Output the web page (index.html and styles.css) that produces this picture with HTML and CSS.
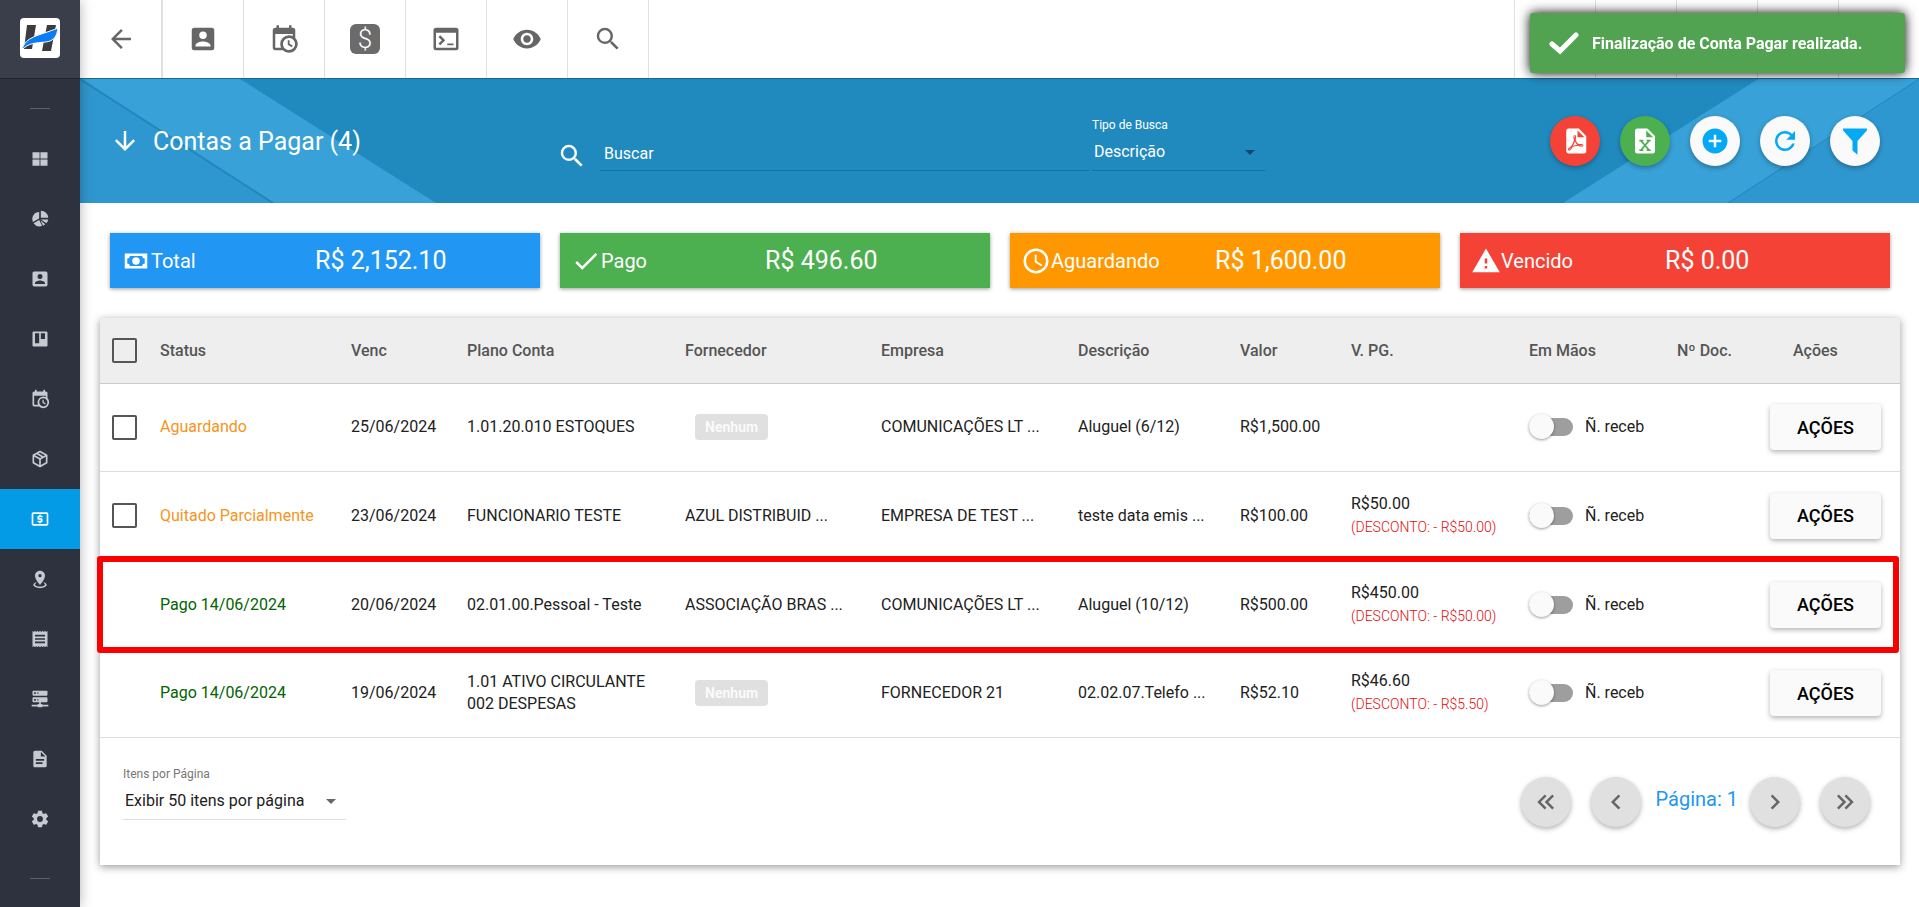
FILE: index.html
```
<!DOCTYPE html>
<html lang="pt-BR">
<head>
    <meta charset="UTF-8">
    <meta name="viewport" content="width=device-width, initial-scale=1.0">
    <title>Contas a Pagar</title>
    <link rel="stylesheet" href="styles.css">
</head>
<body>

<!-- Sidebar -->
<aside class="sidebar">
    <a href="#" class="logo" aria-label="Início">
        <svg viewBox="0 0 40 40">
            <rect width="40" height="40" rx="4" fill="#fff"/>
            <path d="M7 7h9l-4 24H4zM27 7h9l-5 26h-9z" fill="#3c3c40"/>
            <path d="M2 32C5 18 19 18 38 10c-1 8-4 13-12 14C15 25 8 25 2 32z" fill="#0a7cf5" stroke="#fff"/>
        </svg>
    </a>
    <nav class="menu">
        <hr>
        <a href="#" aria-label="Painel"><svg viewBox="0 0 24 24"><path d="M3 4h8.500v7.500H3zM12.500 4H21v7.500h-8.500zM3 12.500h8.500V20H3zM12.500 12.500H21V20h-8.500z"/></svg></a>
        <a href="#" aria-label="Gráficos"><svg viewBox="0 0 24 24"><path d="M13 2a9 9 0 0 1 9 8.500h-9zM11 3.500v8L3.500 15.500A8.500 8.500 0 0 1 11 3.500zM4.200 17L11 13.300l3.500 6.900A9 9 0 0 1 4.200 17zM13 12.500h8.800a9 9 0 0 1-2 4.500zM12.500 13.500l5.700 4.800a8 8 0 0 1-2.500 1.700z"/></svg></a>
        <a href="#" aria-label="Cadastros"><svg viewBox="0 0 24 24"><path d="M6,17C6,15 10,13.900 12,13.900C14,13.900 18,15 18,17V18H6M15,9A3,3 0 0,1 12,12A3,3 0 0,1 9,9A3,3 0 0,1 12,6A3,3 0 0,1 15,9M3,5V19A2,2 0 0,0 5,21H19A2,2 0 0,0 21,19V5A2,2 0 0,0 19,3H5C3.890,3 3,3.900 3,5Z"/></svg></a>
        <a href="#" aria-label="Quadros"><svg viewBox="0 0 24 24"><path fill-rule="evenodd" d="M4 3h16l1 1v16l-1 1H4l-1-1V4zM6 5v12h5V5zM13 5v7h5V5z"/></svg></a>
        <a href="#" aria-label="Agenda"><svg viewBox="0 0 24 24"><path d="M15,13H16.500V15.820L18.940,17.230L18.190,18.530L15,16.690V13M19,8H5V19H9.670C9.240,18.090 9,17.070 9,16A7,7 0 0,1 16,9C17.070,9 18.090,9.240 19,9.670V8M5,21C3.890,21 3,20.100 3,19V5C3,3.890 3.890,3 5,3H6V1H8V3H16V1H18V3H19A2,2 0 0,1 21,5V11.100C22.240,12.360 23,14.090 23,16A7,7 0 0,1 16,23C14.090,23 12.360,22.240 11.100,21H5M16,11.150A4.850,4.850 0 0,0 11.150,16C11.150,18.680 13.320,20.850 16,20.850A4.850,4.850 0 0,0 20.850,16C20.850,13.320 18.680,11.150 16,11.150Z"/></svg></a>
        <a href="#" aria-label="Produtos"><svg viewBox="0 0 24 24"><path d="M21,16.500C21,16.880 20.790,17.210 20.470,17.380L12.570,21.820C12.410,21.940 12.210,22 12,22C11.790,22 11.590,21.940 11.430,21.820L3.530,17.380C3.210,17.210 3,16.880 3,16.500V7.500C3,7.120 3.210,6.790 3.530,6.620L11.430,2.180C11.590,2.060 11.790,2 12,2C12.210,2 12.410,2.060 12.570,2.180L20.470,6.620C20.790,6.790 21,7.120 21,7.500V16.500M12,4.150L10.110,5.220L16,8.610L17.960,7.500L12,4.150M6.040,7.500L12,10.850L13.960,9.750L8.080,6.350L6.040,7.500M5,15.910L11,19.290V12.580L5,9.210V15.910M19,15.910V9.210L13,12.580V19.290L19,15.910Z"/></svg></a>
        <a href="#" class="active" aria-label="Financeiro"><svg viewBox="0 0 24 24"><path d="M11 17h2v-1h1c.55 0 1-.45 1-1v-3c0-.55-.45-1-1-1h-3v-1h4V8h-2V7h-2v1h-1c-.55 0-1 .45-1 1v3c0 .55.45 1 1 1h3v1H9v2h2v1zm9-13H4c-1.110 0-1.990.89-1.990 2L2 18c0 1.110.89 2 2 2h16c1.110 0 2-.89 2-2V6c0-1.110-.89-2-2-2zm0 14H4V6h16v12z"/></svg></a>
        <a href="#" aria-label="Localização"><svg viewBox="0 0 24 24"><path d="M12,2C15.310,2 18,4.660 18,7.950C18,12.410 12,19 12,19C12,19 6,12.410 6,7.950C6,4.660 8.690,2 12,2M12,6A2,2 0 0,0 10,8A2,2 0 0,0 12,10A2,2 0 0,0 14,8A2,2 0 0,0 12,6M20,19C20,21.210 16.420,23 12,23C7.580,23 4,21.210 4,19C4,17.710 5.220,16.560 7.110,15.830L7.750,16.740C6.670,17.190 6,17.810 6,18.500C6,19.880 8.690,21 12,21C15.310,21 18,19.880 18,18.500C18,17.810 17.330,17.190 16.250,16.740L16.890,15.830C18.780,16.560 20,17.710 20,19Z"/></svg></a>
        <a href="#" aria-label="Notas"><svg viewBox="0 0 24 24"><path d="M18 17H6v-2h12v2zm0-4H6v-2h12v2zm0-4H6V7h12v2zM3 22l1.500-1.500L6 22l1.500-1.500L9 22l1.500-1.500L12 22l1.500-1.500L15 22l1.500-1.500L18 22l1.500-1.500L21 22V2l-1.500 1.500L18 2l-1.500 1.500L15 2l-1.500 1.500L12 2l-1.500 1.500L9 2 7.500 3.500 6 2 4.500 3.500 3 2v20z"/></svg></a>
        <a href="#" aria-label="Servidores"><svg viewBox="0 0 24 24"><path d="M13,18H14A1,1 0 0,1 15,19H22V21H15A1,1 0 0,1 14,22H10A1,1 0 0,1 9,21H2V19H9A1,1 0 0,1 10,18H11V16H4A1,1 0 0,1 3,15V11A1,1 0 0,1 4,10H20A1,1 0 0,1 21,11V15A1,1 0 0,1 20,16H13V18M4,2H20A1,1 0 0,1 21,3V7A1,1 0 0,1 20,8H4A1,1 0 0,1 3,7V3A1,1 0 0,1 4,2M9,6H10V4H9V6M9,14H10V12H9V14M5,4V6H7V4H5M5,12V14H7V12H5Z"/></svg></a>
        <a href="#" aria-label="Relatórios"><svg viewBox="0 0 24 24"><path d="M14 2H6c-1.100 0-1.990.9-1.990 2L4 20c0 1.100.89 2 1.990 2H18c1.100 0 2-.9 2-2V8l-6-6zm1 16H7v-2h8v2zm2-4H7v-2h10v2zm-4-5V3.500L18.500 9H13z"/></svg></a>
        <a href="#" aria-label="Configurações"><svg viewBox="0 0 24 24"><path d="M12,15.500A3.500,3.500 0 0,1 8.500,12A3.500,3.500 0 0,1 12,8.500A3.500,3.500 0 0,1 15.500,12A3.500,3.500 0 0,1 12,15.500M19.430,12.970C19.470,12.650 19.500,12.330 19.500,12C19.500,11.670 19.470,11.340 19.430,11L21.540,9.370C21.730,9.220 21.780,8.950 21.660,8.730L19.660,5.270C19.540,5.050 19.270,4.960 19.050,5.050L16.560,6.050C16.040,5.660 15.500,5.320 14.870,5.070L14.500,2.420C14.460,2.180 14.250,2 14,2H10C9.750,2 9.540,2.180 9.500,2.420L9.130,5.070C8.500,5.320 7.960,5.660 7.440,6.050L4.950,5.050C4.730,4.960 4.460,5.050 4.340,5.270L2.340,8.730C2.210,8.950 2.270,9.220 2.460,9.370L4.570,11C4.530,11.340 4.500,11.670 4.500,12C4.500,12.330 4.530,12.650 4.570,12.970L2.460,14.630C2.270,14.780 2.210,15.050 2.340,15.270L4.340,18.730C4.460,18.950 4.730,19.030 4.950,18.950L7.440,17.940C7.960,18.340 8.500,18.680 9.130,18.930L9.500,21.580C9.540,21.820 9.750,22 10,22H14C14.250,22 14.460,21.820 14.500,21.580L14.870,18.930C15.500,18.670 16.040,18.340 16.560,17.940L19.050,18.950C19.270,19.030 19.540,18.950 19.660,18.730L21.660,15.270C21.780,15.050 21.730,14.780 21.540,14.630L19.430,12.970Z"/></svg></a>
        <hr>
    </nav>
</aside>

<main class="page">

    <!-- Top toolbar -->
    <header class="topbar">
        <div class="tools">
            <button type="button" aria-label="Voltar"><svg viewBox="0 0 24 24"><path d="M20 11H7.800l5.600-5.600L12 4l-8 8 8 8 1.400-1.400L7.800 13H20z"/></svg></button>
            <button type="button" aria-label="Clientes"><svg viewBox="0 0 24 24"><path d="M6,17C6,15 10,13.900 12,13.900C14,13.900 18,15 18,17V18H6M15,9A3,3 0 0,1 12,12A3,3 0 0,1 9,9A3,3 0 0,1 12,6A3,3 0 0,1 15,9M3,5V19A2,2 0 0,0 5,21H19A2,2 0 0,0 21,19V5A2,2 0 0,0 19,3H5C3.890,3 3,3.900 3,5Z"/></svg></button>
            <button type="button" aria-label="Agenda"><svg viewBox="0 0 24 24"><path d="M15,13H16.500V15.820L18.940,17.230L18.190,18.530L15,16.690V13M19,8H5V19H9.670C9.240,18.090 9,17.070 9,16A7,7 0 0,1 16,9C17.070,9 18.090,9.240 19,9.670V8M5,21C3.890,21 3,20.100 3,19V5C3,3.890 3.890,3 5,3H6V1H8V3H16V1H18V3H19A2,2 0 0,1 21,5V11.100C22.240,12.360 23,14.090 23,16A7,7 0 0,1 16,23C14.090,23 12.360,22.240 11.100,21H5M16,11.150A4.850,4.850 0 0,0 11.150,16C11.150,18.680 13.320,20.850 16,20.850A4.850,4.850 0 0,0 20.850,16C20.850,13.320 18.680,11.150 16,11.150Z"/></svg></button>
            <button type="button" aria-label="Caixa"><span class="money">$</span></button>
            <button type="button" aria-label="Terminal"><svg viewBox="0 0 24 24"><path fill-rule="evenodd" d="M4 3h16a2 2 0 0 1 2 2v14a2 2 0 0 1-2 2H4a2 2 0 0 1-2-2V5a2 2 0 0 1 2-2zM4 7v12h16V7zM7.400 9L6 10.400 8.600 13 6 15.600 7.400 17l4-4zM13 15.500h5V17h-5z"/></svg></button>
            <button type="button" aria-label="Visualizar"><svg viewBox="0 0 24 24"><path d="M12 4.500C7 4.500 2.730 7.610 1 12c1.730 4.390 6 7.500 11 7.500s9.270-3.110 11-7.500c-1.730-4.390-6-7.500-11-7.500zM12 17c-2.760 0-5-2.240-5-5s2.240-5 5-5 5 2.240 5 5-2.240 5-5 5zm0-8c-1.660 0-3 1.340-3 3s1.340 3 3 3 3-1.340 3-3-1.340-3-3-3z"/></svg></button>
            <button type="button" aria-label="Pesquisar"><svg viewBox="0 0 24 24"><path d="M15.500 14h-.79l-.28-.27A6.471 6.471 0 0 0 16 9.500 6.500 6.500 0 1 0 9.500 16c1.610 0 3.090-.59 4.230-1.570l.27.280v.79l5 4.990L20.490 19l-4.990-5zm-6 0C7.010 14 5 11.990 5 9.500S7.010 5 9.500 5 14 7.010 14 9.500 11.990 14 9.500 14z"/></svg></button>
        </div>
        <div class="slots"><span></span><span></span><span></span><span></span><span></span></div>
    </header>

    <!-- Page banner -->
    <section class="banner">
        <svg class="stripes stripes-left" viewBox="0 0 356 124">
            <path d="M0 0L193 124H0z" fill="#2f97cf"/>
            <path d="M0 0H160L356 124H193z" fill="#38a1d7"/>
            <path d="M0 0L193 124" stroke="#2586bb" stroke-width="2"/>
        </svg>
        <svg class="stripes stripes-right" viewBox="0 0 356 124">
            <path d="M356 0L165 124H356z" fill="#2f97cf"/>
            <path d="M195 0H356L165 124H0z" fill="#38a1d7"/>
            <path d="M356 0L165 124" stroke="#2586bb"/>
        </svg>

        <div class="title">
            <svg class="icon" viewBox="0 0 24 24"><path d="M11 4v12.200L5.400 10.600 4 12l8 8 8-8-1.400-1.400-5.600 5.600V4z"/></svg>
            <h1>Contas a Pagar (4)</h1>
        </div>

        <form class="search">
            <svg class="icon" viewBox="0 0 24 24"><path d="M15.500 14h-.79l-.28-.27A6.471 6.471 0 0 0 16 9.500 6.500 6.500 0 1 0 9.500 16c1.610 0 3.090-.59 4.230-1.570l.27.280v.79l5 4.990L20.490 19l-4.990-5zm-6 0C7.010 14 5 11.990 5 9.500S7.010 5 9.500 5 14 7.010 14 9.500 11.990 14 9.500 14z"/></svg>
            <input type="text" id="busca" placeholder="Buscar" aria-label="Buscar">
            <div class="field field-type">
                <label for="tipoBusca">Tipo de Busca</label>
                <select id="tipoBusca">
                    <option>Descrição</option>
                </select>
            </div>
        </form>

        <div class="actions">
            <button type="button" class="round red" aria-label="PDF"><svg class="icon" viewBox="0 0 24 24"><path d="M14,9H19.500L14,3.500V9M7,2H15L21,8V20A2,2 0 0,1 19,22H7C5.890,22 5,21.100 5,20V4A2,2 0 0,1 7,2M11.930,12.440C12.340,13.340 12.860,14.080 13.460,14.590L13.870,14.910C13,15.070 11.800,15.350 10.530,15.840V15.840L10.420,15.880L10.920,14.840C11.370,13.970 11.700,13.180 11.930,12.440M18.410,16.250C18.590,16.070 18.680,15.840 18.690,15.590C18.720,15.390 18.670,15.200 18.570,15.040C18.280,14.570 17.530,14.350 16.290,14.350L15,14.420L14.130,13.840C13.500,13.320 12.930,12.410 12.530,11.280L12.570,11.140C12.900,9.810 13.210,8.200 12.550,7.540C12.390,7.380 12.170,7.300 11.940,7.300H11.700C11.330,7.300 11,7.690 10.910,8.070C10.540,9.400 10.760,10.130 11.130,11.340V11.350C10.880,12.230 10.560,13.250 10.050,14.280L9.090,16.080L8.200,16.570C7,17.320 6.430,18.160 6.320,18.690C6.280,18.880 6.300,19.050 6.370,19.230L6.400,19.280L6.880,19.590L7.320,19.700C8.130,19.700 9.050,18.750 10.290,16.630L10.470,16.560C11.500,16.230 12.780,16 14.500,15.810C15.530,16.320 16.740,16.550 17.500,16.550C17.940,16.550 18.240,16.440 18.410,16.250M18,15.540L18.090,15.650C18.080,15.750 18.050,15.760 18,15.780H17.960L17.770,15.800C17.310,15.800 16.600,15.610 15.870,15.290C15.960,15.190 16,15.190 16.100,15.190C17.500,15.190 17.900,15.440 18,15.540M8.830,17C8.180,18.190 7.590,18.850 7.140,19C7.190,18.620 7.640,17.960 8.350,17.310L8.830,17M11.850,10.090C11.620,9.190 11.610,8.460 11.780,8.040L11.850,7.920L12,7.970C12.170,8.210 12.190,8.530 12.090,9.070L12.060,9.230L11.900,10.050L11.850,10.090Z"/></svg></button>
            <button type="button" class="round green" aria-label="Excel"><svg class="icon" viewBox="0 0 24 24"><path d="M14 2H6a2 2 0 0 0-2 2v16a2 2 0 0 0 2 2h12a2 2 0 0 0 2-2V8zM13 3.500L18.500 9H13z"/><path d="M9 12l6 7M15 12l-6 7" stroke="#4caf50" stroke-width="1.500"/><path d="M7.500 11.700h3.200M13.300 11.700h3.200M7.500 19.300h3.200M13.300 19.300h3.200" stroke="#4caf50" stroke-width="1.300"/></svg></button>
            <button type="button" class="round" aria-label="Adicionar"><svg class="icon" viewBox="0 0 24 24"><path d="M12 2C6.480 2 2 6.480 2 12s4.480 10 10 10 10-4.480 10-10S17.520 2 12 2zm5 11h-4v4h-2v-4H7v-2h4V7h2v4h4v2z"/></svg></button>
            <button type="button" class="round" aria-label="Atualizar"><svg class="icon" viewBox="0 0 24 24"><path d="M17.650 6.350C16.200 4.900 14.210 4 12 4c-4.420 0-7.990 3.580-7.990 8s3.570 8 7.990 8c3.730 0 6.840-2.550 7.730-6h-2.080c-.82 2.330-3.040 4-5.650 4-3.310 0-6-2.690-6-6s2.690-6 6-6c1.660 0 3.140.69 4.220 1.780L13 11h7V4l-2.350 2.350z"/></svg></button>
            <button type="button" class="round" aria-label="Filtrar"><svg class="icon" viewBox="0 0 24 24"><path d="M2.500 2h19v1.500L14 12v11l-4-3.500V12L2.500 3.500z"/></svg></button>
        </div>
    </section>

    <!-- Totals -->
    <section class="totals">
        <div class="total blue">
            <svg class="icon" viewBox="0 0 24 24"><path d="M3,6H21V18H3V6M12,9A3,3 0 0,1 15,12A3,3 0 0,1 12,15A3,3 0 0,1 9,12A3,3 0 0,1 12,9M7,8A2,2 0 0,1 5,10V14A2,2 0 0,1 7,16H17A2,2 0 0,1 19,14V10A2,2 0 0,1 17,8H7Z"/></svg>
            <span class="name">Total</span>
            <span class="amount">R$ 2,152.10</span>
        </div>
        <div class="total green">
            <svg class="icon" viewBox="0 0 24 24"><path d="M21,7L9,19L3.500,13.500L4.910,12.090L9,16.170L19.590,5.590L21,7Z"/></svg>
            <span class="name">Pago</span>
            <span class="amount">R$ 496.60</span>
        </div>
        <div class="total orange">
            <svg class="icon" viewBox="0 0 24 24"><path d="M12 2a10 10 0 1 0 0 20 10 10 0 0 0 0-20zm0 18a8 8 0 1 1 0-16 8 8 0 0 1 0 16zm.5-13H11v6l5.200 3.200.8-1.300-4.500-2.700z"/></svg>
            <span class="name">Aguardando</span>
            <span class="amount">R$ 1,600.00</span>
        </div>
        <div class="total red">
            <svg class="icon" viewBox="0 0 24 24"><path d="M1 21h22L12 2 1 21zm12-3h-2v-2h2v2zm0-4h-2v-4h2v4z"/></svg>
            <span class="name">Vencido</span>
            <span class="amount">R$ 0.00</span>
        </div>
    </section>

    <!-- Bills table -->
    <section class="panel">
        <table class="bills">
            <colgroup>
                <col class="c-check"><col class="c-status"><col class="c-due"><col class="c-plan">
                <col class="c-supplier"><col class="c-company"><col class="c-desc"><col class="c-value">
                <col class="c-paid"><col class="c-hand"><col class="c-doc"><col class="c-actions">
            </colgroup>
            <thead>
                <tr>
                    <th><input type="checkbox" class="check" aria-label="Selecionar todos"></th>
                    <th>Status</th>
                    <th>Venc</th>
                    <th>Plano Conta</th>
                    <th>Fornecedor</th>
                    <th>Empresa</th>
                    <th>Descrição</th>
                    <th>Valor</th>
                    <th>V. PG.</th>
                    <th>Em Mãos</th>
                    <th>Nº Doc.</th>
                    <th>Ações</th>
                </tr>
            </thead>
            <tbody>
                <tr>
                    <td><input type="checkbox" class="check" aria-label="Selecionar conta 1"></td>
                    <td class="pending">Aguardando</td>
                    <td>25/06/2024</td>
                    <td>1.01.20.010 ESTOQUES</td>
                    <td><span class="badge">Nenhum</span></td>
                    <td>COMUNICAÇÕES LT ...</td>
                    <td>Aluguel (6/12)</td>
                    <td>R$1,500.00</td>
                    <td></td>
                    <td><label class="switch"><input type="checkbox">Ñ. receb</label></td>
                    <td></td>
                    <td><button type="button" class="btn">AÇÕES</button></td>
                </tr>
                <tr>
                    <td><input type="checkbox" class="check" aria-label="Selecionar conta 2"></td>
                    <td class="pending">Quitado Parcialmente</td>
                    <td>23/06/2024</td>
                    <td>FUNCIONARIO TESTE</td>
                    <td>AZUL DISTRIBUID ...</td>
                    <td>EMPRESA DE TEST ...</td>
                    <td>teste data emis ...</td>
                    <td>R$100.00</td>
                    <td>R$50.00<small>(DESCONTO: - R$50.00)</small></td>
                    <td><label class="switch"><input type="checkbox">Ñ. receb</label></td>
                    <td></td>
                    <td><button type="button" class="btn">AÇÕES</button></td>
                </tr>
                <tr class="highlight">
                    <td></td>
                    <td class="paid">Pago 14/06/2024</td>
                    <td>20/06/2024</td>
                    <td>02.01.00.Pessoal - Teste</td>
                    <td>ASSOCIAÇÃO BRAS ...</td>
                    <td>COMUNICAÇÕES LT ...</td>
                    <td>Aluguel (10/12)</td>
                    <td>R$500.00</td>
                    <td>R$450.00<small>(DESCONTO: - R$50.00)</small></td>
                    <td><label class="switch"><input type="checkbox">Ñ. receb</label></td>
                    <td></td>
                    <td><button type="button" class="btn">AÇÕES</button></td>
                </tr>
                <tr>
                    <td></td>
                    <td class="paid">Pago 14/06/2024</td>
                    <td>19/06/2024</td>
                    <td>1.01 ATIVO CIRCULANTE 002 DESPESAS</td>
                    <td><span class="badge">Nenhum</span></td>
                    <td>FORNECEDOR 21</td>
                    <td>02.02.07.Telefo ...</td>
                    <td>R$52.10</td>
                    <td>R$46.60<small>(DESCONTO: - R$5.50)</small></td>
                    <td><label class="switch"><input type="checkbox">Ñ. receb</label></td>
                    <td></td>
                    <td><button type="button" class="btn">AÇÕES</button></td>
                </tr>
            </tbody>
        </table>

        <footer class="panel-footer">
            <div class="field field-size">
                <label for="itens">Itens por Página</label>
                <select id="itens">
                    <option>Exibir 50 itens por página</option>
                </select>
            </div>
            <div class="pager">
                <button type="button" class="round gray" aria-label="Primeira"><svg class="icon" viewBox="0 0 24 24"><path d="M18.410,7.410L17,6L11,12L17,18L18.410,16.590L13.830,12L18.410,7.410M12.410,7.410L11,6L5,12L11,18L12.410,16.590L7.830,12L12.410,7.410Z"/></svg></button>
                <button type="button" class="round gray" aria-label="Anterior"><svg class="icon" viewBox="0 0 24 24"><path d="M15.410,16.590L10.830,12L15.410,7.410L14,6L8,12L14,18L15.410,16.590Z"/></svg></button>
                <span class="current">Página: 1</span>
                <button type="button" class="round gray" aria-label="Próxima"><svg class="icon" viewBox="0 0 24 24"><path d="M8.590,16.590L13.170,12L8.590,7.410L10,6L16,12L10,18L8.590,16.590Z"/></svg></button>
                <button type="button" class="round gray" aria-label="Última"><svg class="icon" viewBox="0 0 24 24"><path d="M5.590,7.410L7,6L13,12L7,18L5.590,16.590L10.170,12L5.590,7.410M11.590,7.410L13,6L19,12L13,18L11.590,16.590L16.170,12L11.590,7.410Z"/></svg></button>
            </div>
        </footer>
    </section>
</main>

<!-- Success message -->
<div class="toast" role="status">
    <svg viewBox="0 0 30 24"><path d="M3 13l8 7L27 4" fill="none" stroke="#fff" stroke-width="5" stroke-linecap="round"/></svg>
    <span>Finalização de Conta Pagar realizada.</span>
</div>

</body>
</html>
```
FILE: styles.css
```
* {
    box-sizing: border-box;
}

body {
    margin: 0;
    display: flex;
    min-height: 100vh;
    font-family: Roboto, Arial, sans-serif;
    font-size: 16px;
    color: #212121;
    background-color: #fff;
}

button, input, select {
    font-family: inherit;
    font-size: inherit;
    color: inherit;
}

button {
    border: none;
    cursor: pointer;
}

svg {
    display: block;
    fill: currentColor;
}

.icon {
    width: 30px;
    height: 30px;
    flex: none;
}

/* Sidebar */
.sidebar {
    position: relative;
    z-index: 2;
    width: 80px;
    flex: none;
    background-color: #2d323e;
    box-shadow: 0 0 12px rgba(0,0,0,0.3);
}

.logo {
    display: flex;
    align-items: center;
    justify-content: center;
    height: 79px;
    padding-bottom: 3px;
    background-color: #3a3e4b;
    border-bottom: 1px solid #1d2029;
}

.logo svg {
    width: 40px;
    height: 40px;
}

.menu hr {
    width: 20px;
    height: 1px;
    margin: 29px auto 20px;
    border: none;
    background-color: #5b6070;
}

.menu a {
    display: flex;
    align-items: center;
    justify-content: center;
    height: 60px;
    color: #c6c9d0;
}

.menu a svg {
    width: 20px;
    height: 20px;
}

.menu .active {
    background-color: #039be5;
    color: #fff;
}

/* Toolbar */
.page {
    flex: 1;
    min-width: 0;
}

.topbar {
    display: flex;
    justify-content: space-between;
    height: 79px;
    border-bottom: 1px solid #1b6791;
}

.tools, .slots {
    display: flex;
}

.tools button {
    display: flex;
    align-items: center;
    justify-content: center;
    width: 81px;
    padding: 0;
    background: none;
    border-right: 1px solid #e0e0e0;
    color: #666;
}

.tools button:first-child {
    width: 83px;
    border-right-width: 2px;
}

.tools svg {
    width: 30px;
    height: 30px;
}

.money {
    width: 30px;
    height: 30px;
    border-radius: 6px;
    background-color: #6b6b6b;
    color: #fff;
    font-size: 26px;
    font-weight: 300;
    line-height: 30px;
}

.slots span {
    width: 81px;
    border-left: 1px solid #e0e0e0;
}

/* Banner */
.banner {
    position: relative;
    display: flex;
    align-items: center;
    justify-content: space-between;
    height: 124px;
    padding: 0 39px 0 30px;
    background-color: #208abf;
    color: #fff;
}

.stripes {
    position: absolute;
    top: 0;
    width: 356px;
    height: 124px;
}

.stripes-left {
    left: 0;
}

.stripes-right {
    right: 0;
}

.title, .search, .actions {
    position: relative;
    display: flex;
}

.title {
    align-items: center;
    flex: 0 0 447px;
    gap: 13px;
}

h1 {
    margin: 0;
    font-size: 25px;
    font-weight: 400;
}

.search {
    flex: 1;
    align-items: flex-end;
    padding: 5px 285px 0 0;
}

.search .icon {
    margin-right: 13px;
}

.search input {
    flex: 1;
    min-width: 0;
    height: 34px;
    margin-right: 3px;
    padding: 0 4px;
    background: none;
    border: none;
    border-bottom: 1px solid #14709f;
}

.search input::placeholder {
    color: #fff;
    opacity: 1;
}

.field label {
    display: block;
    font-size: 12px;
    line-height: 16px;
}

.field select {
    width: 100%;
    height: 38px;
    padding: 0 2px;
    appearance: none;
    background: none;
    border: none;
    border-bottom: 1px solid #ddd;
}

.field {
    position: relative;
}

.field::after {
    content: "";
    position: absolute;
    right: 10px;
    bottom: 16px;
    border: 5px solid transparent;
    border-top-color: #666;
    border-bottom: none;
}

.field-type {
    width: 173px;
}

.field-type select {
    border-bottom-color: #14709f;
}

.field-type::after {
    border-top-color: #0d4a6b;
}

.actions {
    gap: 20px;
}

.round {
    display: flex;
    align-items: center;
    justify-content: center;
    width: 50px;
    height: 50px;
    padding: 0;
    border-radius: 50%;
    background-color: #fafafa;
    color: #03a9f4;
    box-shadow: 0 2px 5px rgba(0,0,0,0.3);
}

.red {
    background-color: #f44336;
    color: #fff;
}

.green {
    background-color: #4caf50;
    color: #fff;
}

.blue {
    background-color: #2196f3;
}

.orange {
    background-color: #ff9800;
}

.gray {
    background-color: #e0e0e0;
    color: #666;
}

/* Totals */
.totals {
    display: flex;
    gap: 20px;
    padding: 30px 29px 30px 30px;
}

.total {
    display: flex;
    align-items: center;
    flex: 1;
    height: 55px;
    padding-left: 11px;
    color: #fff;
    box-shadow: 0 1px 4px rgba(0,0,0,0.4);
}

.total .name {
    flex: 0 0 164px;
    font-size: 20px;
}

.total .amount {
    font-size: 25px;
}

/* Table */
.panel {
    margin: 0 19px 42px 20px;
    background-color: #fff;
    box-shadow: 0 2px 8px rgba(0,0,0,0.4);
}

.bills {
    width: 100%;
    height: 420px;
    table-layout: fixed;
    border-collapse: collapse;
}

.bills th {
    height: 65px;
    padding: 0;
    background-color: #eee;
    border-bottom: 1px solid #ccc;
    color: #555;
    font-weight: 500;
    text-align: left;
}

.bills td {
    height: 88px;
    padding: 0;
    border-bottom: 1px solid #ddd;
    line-height: 22px;
}

.bills th:first-child, .bills td:first-child {
    padding-left: 12px;
}

.bills th:last-child {
    padding-left: 23px;
}

.bills td:nth-child(4) {
    padding-right: 30px;
}

.c-check { width: 60px; }
.c-status { width: 191px; }
.c-due { width: 116px; }
.c-plan { width: 218px; }
.c-supplier { width: 196px; }
.c-company { width: 197px; }
.c-desc { width: 162px; }
.c-value { width: 111px; }
.c-paid { width: 178px; }
.c-hand { width: 148px; }
.c-doc { width: 93px; }
.c-actions { width: 130px; }

.bills small {
    display: block;
    font-size: 14px;
    font-weight: 300;
    line-height: 24px;
    color: #e30b0b;
}

.pending {
    color: #f79420;
}

.paid {
    color: #006400;
}

.badge {
    display: inline-block;
    margin-left: 10px;
    padding: 2px 10px;
    border-radius: 4px;
    background-color: #e0e0e0;
    color: #fafafa;
    font-size: 14px;
    font-weight: 700;
}

.check {
    display: block;
    appearance: none;
    width: 25px;
    height: 25px;
    margin: 0;
    border: 2px solid #555;
    border-radius: 2px;
}

.switch {
    display: flex;
    align-items: center;
    gap: 12px;
}

.switch input {
    position: relative;
    appearance: none;
    width: 44px;
    height: 18px;
    margin: 0;
    border-radius: 9px;
    background-color: #9e9e9e;
}

.switch input::before {
    content: "";
    position: absolute;
    left: 0;
    top: -4px;
    width: 25px;
    height: 25px;
    border-radius: 50%;
    background-color: #fafafa;
    box-shadow: 0 1px 3px rgba(0,0,0,0.4);
}

.btn {
    display: block;
    width: 111px;
    height: 46px;
    border-radius: 4px;
    background-color: #fafafa;
    color: #000;
    font-size: 18px;
    font-weight: 500;
    box-shadow: 0 2px 5px rgba(0,0,0,0.3);
}

/* Red frame around the paid bill */
.highlight {
    position: relative;
}

.highlight::after {
    content: "";
    position: absolute;
    inset: -4px 1px -4px -3px;
    border: 6px solid #fb0000;
    border-radius: 3px;
    pointer-events: none;
}

/* Footer */
.panel-footer {
    display: flex;
    align-items: flex-start;
    justify-content: space-between;
    padding: 28px 30px 38px 23px;
}

.field-size {
    width: 223px;
}

.field-size label {
    color: #777;
}

.pager {
    display: flex;
    align-items: center;
    gap: 20px;
    padding-top: 11px;
}

.current {
    margin: 0 -8px 0 -5px;
    padding-bottom: 6px;
    color: #2196f3;
    font-size: 20px;
}

/* Toast */
.toast {
    position: fixed;
    top: 13px;
    right: 14px;
    z-index: 3;
    display: flex;
    align-items: center;
    gap: 13px;
    width: 375px;
    height: 60px;
    padding-left: 19px;
    border-radius: 3px;
    background-color: #51a351;
    color: #fff;
    font-weight: 700;
    box-shadow: 0 0 12px #000;
}

.toast svg {
    width: 30px;
    height: 24px;
}
```
